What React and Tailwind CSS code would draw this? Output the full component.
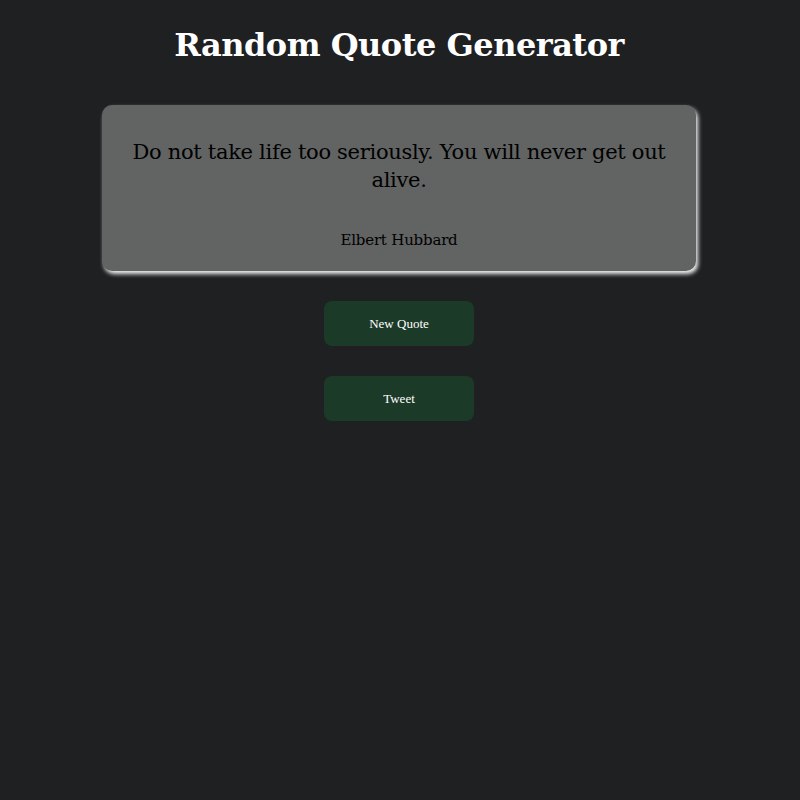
const quote = {
  text: 'Do not take life too seriously. You will never get out alive.',
  author: 'Elbert Hubbard',
}

const slab = { fontFamily: '"DejaVu Serif", "Liberation Serif", serif' }

export default function App() {
  return (
    <div className="min-h-[800px] bg-[#1f2022] pt-[22px] pr-[2px] text-center" style={slab}>
      <h1 className="text-[32px] font-bold leading-[46px] tracking-[-0.5px] text-white">
        Random Quote Generator
      </h1>

      <div className="mx-auto mt-[37px] flex w-[594px] flex-col items-center rounded-[10px] bg-[#626363] px-[20px] pb-[20px] pt-[33px] shadow-[2px_3px_4px_rgba(255,255,255,0.95)]">
        <p className="text-[21px] leading-[28px] tracking-[-0.3px] text-black">{quote.text}</p>
        <p className="mt-[35px] text-[15px] leading-[22px] tracking-[-0.2px] text-black">{quote.author}</p>
      </div>

      <div className="mt-[30px] flex flex-col items-center gap-[30px]">
        <button
          className="h-[45px] w-[150px] rounded-[8px] bg-[#1c3a28] text-[13px] text-white"
          style={{ fontFamily: '"Liberation Serif", serif' }}
        >
          New Quote
        </button>
        <button
          className="h-[45px] w-[150px] rounded-[8px] bg-[#1c3a28] text-[13px] text-white"
          style={{ fontFamily: '"Liberation Serif", serif' }}
        >
          Tweet
        </button>
      </div>
    </div>
  )
}
